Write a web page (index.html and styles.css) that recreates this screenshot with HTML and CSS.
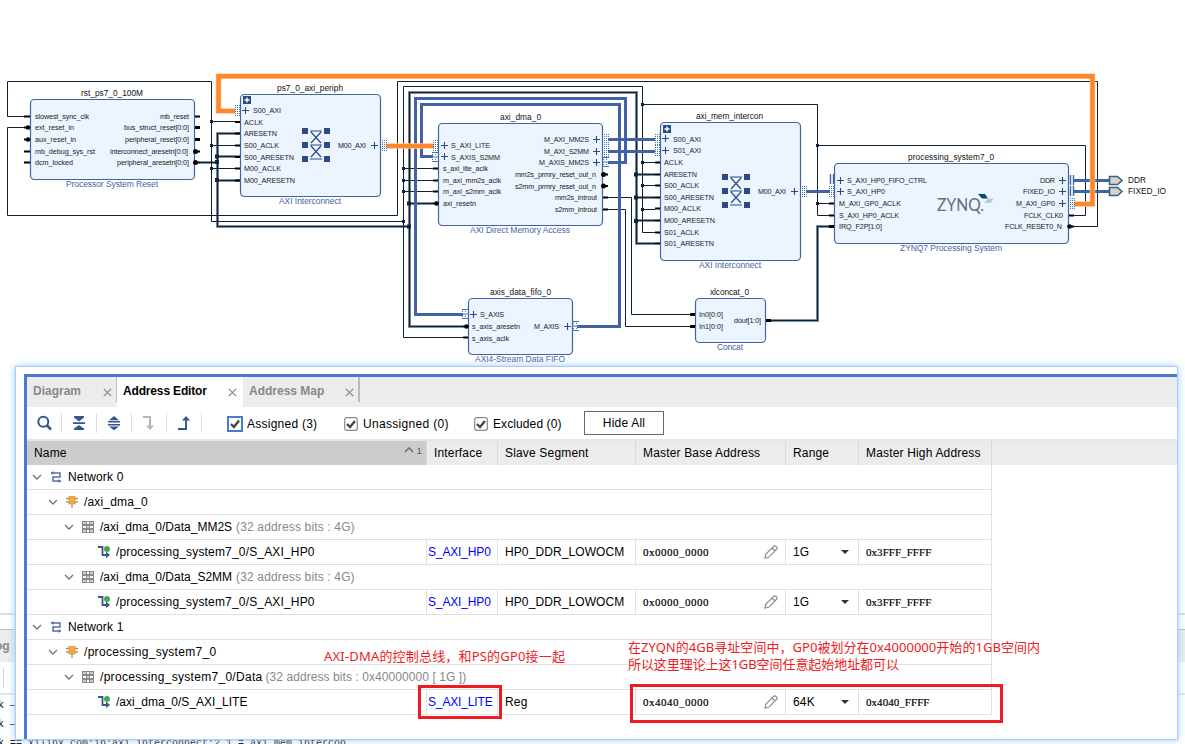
FILE: index.html
```html
<!DOCTYPE html>
<html lang="zh">
<head>
<meta charset="utf-8">
<title>Address Editor</title>
<link rel="stylesheet" href="styles.css">
</head>
<body>
<svg class="diagram" width="1185" height="366" viewBox="0 0 1185 366">
  <defs>
    <g id="plus"><path d="M-3.5 0h7M0 -3.5v7"/></g>
    <g id="expand"><rect width="8" height="8" fill="#2c4a85"/><path d="M4 1.500v5M1.500 4h5" stroke="#fff" stroke-width="1.400"/></g>
    <g id="cross">
      <path d="M0 0h6v6h-6zM22 0h6v6h-6zM0 14h6v6h-6zM22 14h6v6h-6zM0 28h6v6h-6zM22 28h6v6h-6z" fill="#2c4a85"/>
      <path d="M8 3h12M8 17h12M8 31h12M9 4l10 11M19 4l-10 11M9 18l10 11M19 18l-10 11" fill="none" stroke="#2c4a85" stroke-width="1.200"/>
    </g>
    <g id="dots"><path d="M.5 -5v11M2.500 -5v11M4.500 -5v11" stroke="#3a76b5" stroke-dasharray="1 1" fill="none"/></g>
    <g id="stream"><path d="M0 -4.500h6M0 4.500h6M0 0h6" stroke="#3a76b5" fill="none"/><path d="M0 -2.500h6M0 2.500h6" stroke="#3a76b5" stroke-dasharray="1 2" fill="none"/></g>
    <g id="bars"><path d="M.5 -5v10M3.500 -5v10" stroke="#3a68a0" stroke-width="1.400" fill="none"/></g>
  </defs>

  <g class="reset-halo"><path id="reset" d="M200 162.500H217.500M241 133.500H217.500V226.500H409.500M241 156.500H217.500M241 180.500H217.500M463 326.500H409.500V92.500H636.500V243.500H655M409.500 203.500H433M636.500 174.500H655M636.500 197.500H655M636.500 220.500H655M770 320.500H817.500V226.500H830"/></g>
  <use href="#reset" class="reset-core"/>
  <g class="wire">
    <path d="M24 116.500H7.500V81.500H211.500V221.500H403.500M211.500 121.500H236M211.500 145.500H236M211.500 168.500H236"/>
    <path d="M24 127.500H7.500V215.500H397.500V81.500H1097.500V226.500H1072"/>
    <path d="M463 337.500H403.500V86.500H642.500V232.500H655M403.500 168.500H433M403.500 180.500H433M403.500 191.500H433M642.500 104.500H817.500V215.500H830M642.500 162.500H655M642.500 185.500H655M642.500 209.500H655M817.500 203.500H830M817.500 145.500H1085.500V215.500H1073"/>
    <path d="M607 197.500H631.500V314.500H690M607 209.500H625.500V326.500H690"/>
  </g>
  <path class="bus" d="M463 314.500H415.500V98.500H625.500V162.500H608M433 156.500H421.500V104.500H619.500V326.500H577M608 139.500H655M608 151.500H655M806 191.500H830M1074 180.500H1109M1074 191.500H1109"/>
  <g class="hot-halo"><path id="hot" d="M235 111H218.500V76.200H1092.500V204H1074M386 146H434"/></g>
  <use href="#hot" class="hot"/>

  <path class="junction" d="M210 120h3v3h-3zM210 144h3v3h-3zM210 167h3v3h-3zM402 167h3v3h-3zM402 179h3v3h-3zM402 190h3v3h-3zM402 220h3v3h-3zM641 103h3v3h-3zM641 161h3v3h-3zM641 184h3v3h-3zM641 208h3v3h-3zM816 144h3v3h-3zM816 202h3v3h-3zM215 154.500h4v4h-4zM215 160h4v4h-4zM215 178h4v4h-4zM407 201.500h4v4h-4zM407 224.500h4v4h-4zM634 172.500h4v4h-4zM634 195.500h4v4h-4zM634 219h4v4h-4z"/>

  <g class="block">
    <rect x="30.500" y="99.500" width="164" height="80" rx="4"/>
    <rect x="240.500" y="94.500" width="140" height="102" rx="4"/>
    <rect x="438.500" y="123.500" width="164" height="102" rx="4"/>
    <rect x="660.500" y="122.500" width="140" height="138" rx="4"/>
    <rect x="834.500" y="163.500" width="234" height="80" rx="4"/>
    <rect x="468.500" y="298.500" width="104" height="56" rx="4"/>
    <rect x="695.500" y="298.500" width="70" height="44" rx="4"/>
  </g>

  <path class="pin" d="M24 116.500h6M24 151.500h6M24 162.500h6M195 116.500h5M235 122h5M235 133.500h5M235 145.500h5M235 157h5M235 168.500h5M235 180.500h5M433 168.500h5M433 180.500h5M433 191.500h5M603 197.500h5M603 209.500h5M655 162.500h5M655 174.500h5M655 185.500h5M655 197.500h5M655 208.500h5M655 220.500h5M655 232.500h5M655 243.500h5M829 203.500h5M829 215.500h5M1069 215.500h5M463 337.500h5M24 127.500h5M24 139.500h5M195 151.500h5M195 162.500h5M603 174.500h5M603 186h5M1069 226.500h5M433 203.500h5M463 326.500h5"/>
  <path class="pin wide" d="M195 127.500h5M195 139.500h5M829 226.500h5M690 314.500h5M690 326.500h5M766 320.500h5"/>
  <g class="knob"><circle cx="28" cy="127.500" r="2.300"/><circle cx="28" cy="139.500" r="2.300"/><circle cx="195.500" cy="151.500" r="2.500"/><circle cx="195.500" cy="162.500" r="2.500"/><circle cx="436.500" cy="203.500" r="2.300"/><circle cx="603.500" cy="174.500" r="2.500"/><circle cx="603.500" cy="186" r="2.500"/><circle cx="466.500" cy="326.500" r="2.300"/><circle cx="1069.500" cy="226.500" r="2.300"/></g>

  <use href="#dots" x="235" y="110"/><use href="#dots" x="382" y="145"/><use href="#dots" x="433" y="145"/>
  <use href="#dots" x="604" y="139"/><use href="#dots" x="604" y="151"/><use href="#dots" x="655" y="139"/><use href="#dots" x="655" y="150"/>
  <use href="#dots" x="802" y="191"/><use href="#dots" x="829" y="191"/><use href="#dots" x="1070" y="203"/>
  <use href="#stream" x="432" y="157"/><use href="#stream" x="603" y="162"/><use href="#stream" x="462" y="314"/><use href="#stream" x="573" y="326"/>
  <use href="#bars" x="830" y="179"/><use href="#bars" x="1070" y="180"/><use href="#bars" x="1070" y="191"/>
  <g class="plus">
    <use href="#plus" x="245.500" y="110.500"/><use href="#plus" x="374.500" y="145.500"/><use href="#plus" x="444.500" y="145.500"/><use href="#plus" x="444.500" y="156.500"/>
    <use href="#plus" x="596.500" y="139.500"/><use href="#plus" x="596.500" y="151.500"/><use href="#plus" x="596.500" y="162.500"/><use href="#plus" x="665.500" y="138.500"/><use href="#plus" x="665.500" y="150.500"/>
    <use href="#plus" x="794.500" y="191.500"/><use href="#plus" x="840.500" y="180.500"/><use href="#plus" x="840.500" y="191.500"/><use href="#plus" x="1062.500" y="180.500"/><use href="#plus" x="1062.500" y="191.500"/><use href="#plus" x="1062.500" y="203.500"/>
    <use href="#plus" x="473.500" y="314.500"/><use href="#plus" x="567.500" y="326.500"/>
  </g>
  <use href="#expand" x="243" y="96"/><use href="#expand" x="663" y="125"/>
  <use href="#cross" x="302" y="128"/><use href="#cross" x="722" y="174"/>
  <path class="port" d="M1109.500 176.500h8l4.500 4-4.500 4h-8zM1109.500 187.500h8l4.500 4-4.500 4h-8z"/>

  <g class="title">
    <text x="81" y="96" textLength="62">rst_ps7_0_100M</text><text x="277" y="91" textLength="66">ps7_0_axi_periph</text><text x="500" y="120" textLength="41">axi_dma_0</text><text x="696" y="119" textLength="67">axi_mem_intercon</text><text x="908" y="160" textLength="86">processing_system7_0</text><text x="490" y="295" textLength="61">axis_data_fifo_0</text><text x="710" y="295" textLength="39">xlconcat_0</text>
    <text x="1128" y="183" textLength="18">DDR</text><text x="1128" y="194" textLength="38">FIXED_IO</text>
  </g>
  <g class="caption">
    <text x="66" y="187" textLength="92">Processor System Reset</text><text x="279" y="204" textLength="62">AXI Interconnect</text><text x="470" y="233" textLength="100">AXI Direct Memory Access</text><text x="699" y="268" textLength="62">AXI Interconnect</text><text x="900" y="251" textLength="102">ZYNQ7 Processing System</text><text x="475" y="362" textLength="90">AXI4-Stream Data FIFO</text><text x="717" y="350" textLength="26">Concat</text>
  </g>
  <g class="label">
    <text x="35" y="119" textLength="54">slowest_sync_clk</text><text x="35" y="130" textLength="39">ext_reset_in</text><text x="35" y="142" textLength="41">aux_reset_in</text><text x="35" y="154" textLength="60">mb_debug_sys_rst</text><text x="35" y="165" textLength="38">dcm_locked</text>
    <text x="160" y="119" textLength="29">mb_reset</text><text x="124" y="130" textLength="65">bus_struct_reset[0:0]</text><text x="125" y="142" textLength="64">peripheral_reset[0:0]</text><text x="110" y="154" textLength="78">interconnect_aresetn[0:0]</text><text x="117" y="165" textLength="72">peripheral_aresetn[0:0]</text>
    <text x="253" y="113" textLength="28">S00_AXI</text><text x="244" y="125" textLength="19">ACLK</text><text x="244" y="136" textLength="33">ARESETN</text><text x="244" y="148" textLength="35">S00_ACLK</text><text x="244" y="160" textLength="50">S00_ARESETN</text><text x="244" y="171" textLength="37">M00_ACLK</text><text x="244" y="183" textLength="51">M00_ARESETN</text><text x="338" y="148" textLength="28">M00_AXI</text>
    <text x="451" y="148" textLength="39">S_AXI_LITE</text><text x="451" y="160" textLength="49">S_AXIS_S2MM</text><text x="443" y="171" textLength="45">s_axi_lite_aclk</text><text x="443" y="183" textLength="58">m_axi_mm2s_aclk</text><text x="443" y="194" textLength="58">m_axi_s2mm_aclk</text><text x="443" y="206" textLength="33">axi_resetn</text>
    <text x="544" y="142" textLength="45">M_AXI_MM2S</text><text x="544" y="154" textLength="45">M_AXI_S2MM</text><text x="539" y="165" textLength="50">M_AXIS_MM2S</text><text x="515" y="177" textLength="81">mm2s_prmry_reset_out_n</text><text x="515" y="189" textLength="81">s2mm_prmry_reset_out_n</text><text x="555" y="200" textLength="42">mm2s_introut</text><text x="555" y="212" textLength="42">s2mm_introut</text>
    <text x="673" y="142" textLength="28">S00_AXI</text><text x="673" y="153" textLength="28">S01_AXI</text><text x="664" y="165" textLength="19">ACLK</text><text x="664" y="177" textLength="33">ARESETN</text><text x="664" y="188" textLength="35">S00_ACLK</text><text x="664" y="200" textLength="50">S00_ARESETN</text><text x="664" y="211" textLength="37">M00_ACLK</text><text x="664" y="223" textLength="51">M00_ARESETN</text><text x="664" y="235" textLength="35">S01_ACLK</text><text x="664" y="246" textLength="50">S01_ARESETN</text><text x="758" y="194" textLength="28">M00_AXI</text>
    <text x="847" y="183" textLength="80">S_AXI_HP0_FIFO_CTRL</text><text x="847" y="194" textLength="38">S_AXI_HP0</text><text x="839" y="206" textLength="62">M_AXI_GP0_ACLK</text><text x="839" y="218" textLength="60">S_AXI_HP0_ACLK</text><text x="839" y="229" textLength="43">IRQ_F2P[1:0]</text>
    <text x="1040" y="183" textLength="15">DDR</text><text x="1023" y="194" textLength="32">FIXED_IO</text><text x="1016" y="206" textLength="39">M_AXI_GP0</text><text x="1024" y="218" textLength="39">FCLK_CLK0</text><text x="1005" y="229" textLength="57">FCLK_RESET0_N</text>
    <text x="480" y="317" textLength="24">S_AXIS</text><text x="472" y="329" textLength="48">s_axis_aresetn</text><text x="472" y="341" textLength="37">s_axis_aclk</text><text x="534" y="329" textLength="25">M_AXIS</text>
    <text x="699" y="317" textLength="24">In0[0:0]</text><text x="699" y="329" textLength="24">In1[0:0]</text><text x="734" y="323" textLength="27">dout[1:0]</text>
  </g>
  <text class="zynq" x="937" y="211" textLength="47" lengthAdjust="spacingAndGlyphs">ZYNQ.</text>
  <path d="M978 194h7l3 4.500h-6z" fill="#004b73"/><path d="M988 198.500h6l-3.500 4.500h-6z" fill="#b5cdd9"/>
</svg>

<div class="backdrop">
  <div class="backdrop-edge"></div>
  <div class="backdrop-tabs">og</div>
  <div class="backdrop-tools"><i></i></div>
  <pre class="console">k —
k —
k == xilinx.com:ip:axi_interconnect:2.1 = axi_mem_intercon</pre>
</div>

<svg class="symbols" width="0" height="0">
  <symbol id="i-chev" viewBox="0 0 10 12"><path d="M1 4l4 4 4-4" fill="none" stroke="#737373" stroke-width="1.300"/></symbol>
  <symbol id="i-net" viewBox="0 0 12 12"><path d="M1 2h9v4h-7v4h8" fill="none" stroke="#55709f" stroke-width="1.500"/><path d="M3.500 0v4L1 2zM8.500 8v4l2.500-2z" fill="#55709f"/></symbol>
  <symbol id="i-chip" viewBox="0 0 12 12"><path d="M0 2.500h12M0 6h12M6 8v4" stroke="#999" stroke-width="1.300"/><rect x="3" y=".5" width="6" height="7.500" fill="#f9ab2d" stroke="#bd9250" stroke-width=".7"/></symbol>
  <symbol id="i-grid" viewBox="0 0 12 12"><rect width="12" height="12" fill="#8b8b8b"/><path d="M1 1h3v2h-3zM8 1h3v2h-3zM5 5h2v2h-2zM1 9h3v2h-3zM8 9h3v2h-3z" fill="#ccc"/><path d="M5 1h2v2h-2zM1 5h3v2h-3zM8 5h3v2h-3zM5 9h2v2h-2z" fill="#fff"/></symbol>
  <symbol id="i-leaf" viewBox="0 0 12 12"><path d="M0 1h4.500v8h4" fill="none" stroke="#3b5689" stroke-width="1.800"/><path d="M8 5.500l4 3.500-4 3z" fill="#3b5689"/><circle cx="9" cy="3" r="3" fill="#40ad49"/></symbol>
  <symbol id="i-pen" viewBox="0 0 14 14"><path d="M1 13l.7-3.700L9.300 1.700q1.500-1.500 3 0t0 3L4.700 12.300zM8 3l3 3" fill="none" stroke="#888" stroke-width="1.200"/></symbol>
  <symbol id="i-x" viewBox="0 0 9 9"><path d="M.8 .8l7.400 7.400M8.200 .8l-7.400 7.400" stroke="#858585" stroke-width="1.200"/></symbol>
  <symbol id="i-check" viewBox="0 0 14 14"><rect x=".7" y=".7" width="12.600" height="12.600" rx="2" fill="#fff" stroke="#888" stroke-width="1.200"/><path d="M3 7l3 3 5-6" fill="none" stroke="#444" stroke-width="2.300"/></symbol>
</svg>

<section class="panel">
 <div class="editor">
  <nav class="tabs">
    <div class="tab first">Diagram<svg width="9" height="9"><use href="#i-x"/></svg></div>
    <div class="tab active">Address Editor<svg width="9" height="9"><use href="#i-x"/></svg></div>
    <div class="tab last">Address Map<svg width="9" height="9"><use href="#i-x"/></svg></div>
  </nav>
  <div class="toolbar">
    <div class="tool"><svg width="16" height="16"><circle cx="7.300" cy="6.700" r="5" fill="none" stroke="#35558c" stroke-width="2"/><path d="M11 10.500l4 4" stroke="#35558c" stroke-width="2.600"/></svg></div>
    <div class="tool"><svg width="16" height="16" fill="#35558c"><path d="M3 1h10v1.500L8 6.500 3 2.500zM2 7.200h12v1.800H2zM3 15h10v-1.500L8 10 3 13.500z"/></svg></div>
    <div class="tool"><svg width="16" height="16" fill="#35558c"><path d="M8 1l5 4.200H3zM2 6h12v1.600H2zM2 9h12v1.600H2zM3 11.400h10L8 15.200z"/></svg></div>
    <div class="tool"><svg width="16" height="16"><path d="M2 2h7v10" fill="none" stroke="#b5b5b5" stroke-width="2"/><path d="M5 10.500h8L9 15z" fill="#b5b5b5"/></svg></div>
    <div class="tool"><svg width="16" height="16"><path d="M2 14h8V4" fill="none" stroke="#35558c" stroke-width="2"/><path d="M6 5.500h8L10 1z" fill="#35558c"/></svg></div>
    <label class="check c1"><span class="focus"><svg width="12" height="12" viewBox="0 0 12 12"><path d="M2 6l3 3 5-6.500" fill="none" stroke="#444" stroke-width="2.400"/></svg></span>Assigned (3)</label>
    <label class="check c2"><svg width="14" height="14"><use href="#i-check"/></svg>Unassigned (0)</label>
    <label class="check c3"><svg width="14" height="14"><use href="#i-check"/></svg>Excluded (0)</label>
    <button class="hide">Hide All</button>
  </div>
  <div class="row head">
    <div class="name">Name<span class="sort"><svg width="10" height="7"><path d="M1 6l4-4 4 4" fill="none" stroke="#777" stroke-width="1.700"/></svg>1</span></div><div>Interface</div><div>Slave Segment</div><div>Master Base Address</div><div>Range</div><div>Master High Address</div>
  </div>
  <div class="row span"><div class="node l0"><svg class="chev"><use href="#i-chev"/></svg><svg class="ico"><use href="#i-net"/></svg>Network 0</div></div>
  <div class="row span"><div class="node l1"><svg class="chev"><use href="#i-chev"/></svg><svg class="ico"><use href="#i-chip"/></svg>/axi_dma_0</div></div>
  <div class="row span"><div class="node l2 tight"><svg class="chev"><use href="#i-chev"/></svg><svg class="ico"><use href="#i-grid"/></svg>/axi_dma_0/Data_MM2S<em>(32 address bits : 4G)</em></div></div>
  <div class="row"><div class="node leaf"><svg class="ico"><use href="#i-leaf"/></svg>/processing_system7_0/S_AXI_HP0</div><div class="link">S_AXI_HP0</div><div class="segment">HP0_DDR_LOWOCM</div><div class="addr">0x0000_0000<svg width="14" height="14"><use href="#i-pen"/></svg></div><div class="range">1G<i></i></div><div class="addr high">0x3FFF_FFFF</div></div>
  <div class="row span"><div class="node l2 tight"><svg class="chev"><use href="#i-chev"/></svg><svg class="ico"><use href="#i-grid"/></svg>/axi_dma_0/Data_S2MM<em>(32 address bits : 4G)</em></div></div>
  <div class="row"><div class="node leaf"><svg class="ico"><use href="#i-leaf"/></svg>/processing_system7_0/S_AXI_HP0</div><div class="link">S_AXI_HP0</div><div class="segment">HP0_DDR_LOWOCM</div><div class="addr">0x0000_0000<svg width="14" height="14"><use href="#i-pen"/></svg></div><div class="range">1G<i></i></div><div class="addr high">0x3FFF_FFFF</div></div>
  <div class="row span"><div class="node l0"><svg class="chev"><use href="#i-chev"/></svg><svg class="ico"><use href="#i-net"/></svg>Network 1</div></div>
  <div class="row span"><div class="node l1 loose"><svg class="chev"><use href="#i-chev"/></svg><svg class="ico"><use href="#i-chip"/></svg>/processing_system7_0</div></div>
  <div class="row span"><div class="node l2 loose"><svg class="chev"><use href="#i-chev"/></svg><svg class="ico"><use href="#i-grid"/></svg>/processing_system7_0/Data<em>(32 address bits : 0x40000000 [ 1G ])</em></div></div>
  <div class="row"><div class="node leaf tight"><svg class="ico"><use href="#i-leaf"/></svg>/axi_dma_0/S_AXI_LITE</div><div class="link">S_AXI_LITE</div><div>Reg</div><div class="addr">0x4040_0000<svg width="14" height="14"><use href="#i-pen"/></svg></div><div class="range">64K<i></i></div><div class="addr high">0x4040_FFFF</div></div>
 </div>
</section>

<svg class="notes" width="1185" height="744">
  <rect x="419.500" y="686.500" width="81" height="31"/>
  <rect x="631.500" y="685.500" width="370" height="36"/>
  <text x="324" y="661" textLength="241">AXI-DMA的控制总线，和PS的GP0接一起</text>
  <text x="628" y="652" textLength="412">在ZYQN的4GB寻址空间中，GP0被划分在0x4000000开始的1GB空间内</text>
  <text x="628" y="669" textLength="271">所以这里理论上这1GB空间任意起始地址都可以</text>
</svg>
</body>
</html>
```
FILE: styles.css
```css
* { box-sizing: border-box; }
body { margin: 0; width: 1185px; height: 744px; overflow: hidden; position: relative; background: #fff; font: 12px "Liberation Sans", Arial, sans-serif; color: #000; }
svg { flex: none; }
.symbols { position: absolute; }

/* Block design */
.diagram { display: block; }
.diagram text { font-family: "Liberation Sans", Arial, sans-serif; }
.wire path, .reset-core { fill: none; stroke: #0d2136; stroke-width: 1; }
.reset-halo { stroke: #8294a0; stroke-width: 3; }
.reset-core { stroke-width: 1.2; }
.bus { fill: none; stroke: #4163a5; stroke-width: 3; }
#hot, #reset { fill: none; }
.hot-halo { stroke: #ffc38e; stroke-width: 5.6; }
.hot { stroke: #ff872b; stroke-width: 4.2; }
.junction { fill: #0c2338; }
.block rect { fill: #ecf4ff; stroke: #4264a4; stroke-width: 1.2; }
.pin { stroke: #000; stroke-width: 2; }
.pin.wide { stroke-width: 3; }
.knob { fill: #000; }
.plus { stroke: #2c4a85; stroke-width: 1.1; }
.port { fill: #dacfcb; stroke: #326878; stroke-width: 1.6; }
.title { font-size: 8.3px; fill: #111; }
.caption { font-size: 8.5px; fill: #4563a5; }
.label { font-size: 7.2px; fill: #1b1b1b; }
.diagram .zynq { font-family: Lato, sans-serif; font-weight: 400; font-size: 18px; fill: #6a6a72; }

/* Window behind the panel */
.backdrop { margin-top: 247px; }
.backdrop-edge { height: 17px; border-top: 2px solid #dedede; border-bottom: 1px solid #bbb; }
.backdrop-tabs { height: 32px; background: #ececec; color: #888; font-weight: bold; line-height: 32px; text-indent: -5px; }
.backdrop-tools { height: 33px; border-bottom: 2px solid #e6e6e6; padding: 6px 3px; }
.backdrop-tools i { display: block; width: 1px; height: 20px; background: #d5d5d5; }
.console { margin: 0 0 0 -2px; padding-top: 1px; font: 10px/19px "Liberation Mono", monospace; color: #000; }

/* Floating panel */
.panel { position: absolute; left: 16px; top: 367px; width: 1161px; height: 372px; background: #fff; padding: 7px 0 0 8px; box-shadow: 0 0 1px 1px #a9cefb, 0 0 8px 1px #a6cdff; }
.editor { height: 365px; border-top: 3px solid #4a7bd0; border-left: 3px solid #4a7bd0; }
.tabs { display: flex; height: 30px; background: #ececec; font-weight: bold; color: #888; }
.tab { display: flex; justify-content: space-between; align-items: center; }
.tab svg { margin-top: 3px; }
.tab.first { width: 90px; height: 25px; border-right: 1px solid #bbb; padding: 3px 4px 0 6px; }
.tab.active { width: 126px; height: 30px; background: #fff; color: #000; letter-spacing: -.16px; padding: 0 6px 2px 6px; }
.tab.last { width: 117px; height: 25px; border-right: 2px solid #bbb; padding: 3px 4px 0 6px; }
.toolbar { display: flex; align-items: center; height: 34px; border-bottom: 2px solid #e6e6e6; letter-spacing: .25px; }
.tool { width: 35px; height: 20px; display: flex; align-items: center; justify-content: center; border-right: 1px solid #ddd; }
.check { display: flex; align-items: center; gap: 5px; white-space: nowrap; padding-top: 1px; }
.check.c1 { width: 117px; margin-left: 25px; gap: 4px; }
.check.c2 { width: 130px; letter-spacing: .32px; }
.check.c3 { width: 110px; letter-spacing: .1px; }
.focus { display: flex; border: 2px solid #4a7bd0; }
.hide { width: 80px; height: 24px; border: 1px solid #666; background: #fff; color: #000; font: 12px "Liberation Sans", sans-serif; padding: 0; letter-spacing: .2px; }
.row { display: grid; grid-template-columns: 400px 71px 138px 150px 73px 133px; height: 25px; width: 965px; letter-spacing: .17px; }
.row > div { display: flex; align-items: center; border-right: 1px solid #e0e0e0; border-bottom: 1px solid #e0e0e0; padding-left: 7px; white-space: nowrap; min-width: 0; }
.row.span { grid-template-columns: 965px; }
.row.head { height: 24px; width: 100%; background: #ececec; }
.row.head > div { border-bottom: 0; border-color: #dadada; }
.row.head .name { background: #ccc; justify-content: space-between; padding: 0 4px 0 7px; }
.sort { display: flex; gap: 3px; font-size: 9px; color: #555; padding-bottom: 4px; }
.row .node { padding-left: 5px; }
.row .l1 { padding-left: 21px; }
.row .l2 { padding-left: 37px; }
.row .leaf { padding-left: 71px; }
.tight { letter-spacing: 0; }
.loose { letter-spacing: .3px; }
.chev { width: 10px; height: 12px; margin-right: 8px; }
.ico { width: 12px; height: 12px; margin-right: 6px; }
.node em { font-style: normal; color: #888; margin-left: 4px; letter-spacing: .15px; }
.loose em { margin-left: 3px; letter-spacing: .07px; }
.row .link { color: #00f; padding-left: 1px; letter-spacing: -.15px; }
.segment { letter-spacing: .1px; }
.row .addr { font: 11px "Liberation Serif", serif; letter-spacing: .5px; justify-content: space-between; padding-right: 7px; -webkit-text-stroke: .2px #000; }
.row .addr.high { letter-spacing: .05px; }
.row .range { justify-content: space-between; padding-right: 9px; }
.range i { border: 4px solid transparent; border-top-color: #333; border-bottom: 0; }

/* Annotations */
.notes { position: absolute; left: 0; top: 0; }
.notes rect { fill: none; stroke: #ed1c24; stroke-width: 3; }
.notes text { font: 13px "Noto Sans", "Noto Sans CJK SC", sans-serif; fill: #ed1c24; }
```
